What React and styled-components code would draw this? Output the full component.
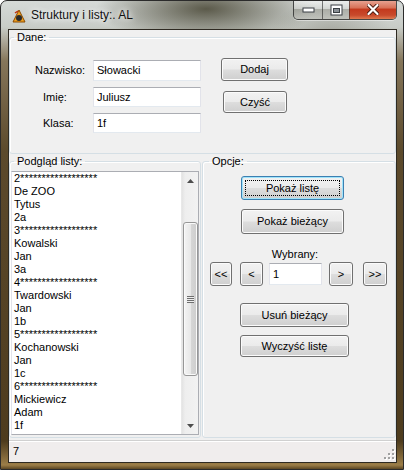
import React from 'react'
import styled, { createGlobalStyle, css } from 'styled-components'

const GlobalStyle = createGlobalStyle`
  html, body { margin: 0; padding: 0; background: #fff; }
  body { font-family: "Liberation Sans", Arial, sans-serif; font-size: 11px; }
  * { box-sizing: border-box; }
`

const stars = '*'.repeat(18)
const items = [
  '2' + stars, 'De ZOO', 'Tytus', '2a',
  '3' + stars, 'Kowalski', 'Jan', '3a',
  '4' + stars, 'Twardowski', 'Jan', '1b',
  '5' + stars, 'Kochanowski', 'Jan', '1c',
  '6' + stars, 'Mickiewicz', 'Adam', '1f',
]

const AppIcon = () => (
  <svg width="16" height="16" viewBox="0 0 16 16">
    <path d="M2 14 L8 2 L14 14 Z" fill="#f0a020" stroke="#8a4a00" strokeWidth="1" />
    <circle cx="8" cy="10" r="3" fill="#2a2a2a" />
    <path d="M4 5 L7 3" stroke="#c03010" strokeWidth="1.5" />
  </svg>
)

const MinGlyph = () => (
  <svg width="13" height="6" viewBox="0 0 13 6">
    <rect x="1" y="1" width="11" height="4" fill="#fff" stroke="#3a3f44" strokeWidth="1" />
  </svg>
)

const MaxGlyph = () => (
  <svg width="13" height="12" viewBox="0 0 13 12">
    <rect x="1" y="1" width="11" height="10" fill="#fff" stroke="#3a3f44" strokeWidth="1" />
    <rect x="3.5" y="4.5" width="6" height="4" fill="#8a9096" stroke="#3a3f44" strokeWidth="1" />
  </svg>
)

const CloseGlyph = () => (
  <svg width="12" height="11" viewBox="0 0 12 11">
    <path d="M1.5 1 L10.5 10 M10.5 1 L1.5 10" stroke="#4a1a10" strokeWidth="4" strokeLinecap="round" />
    <path d="M1.5 1 L10.5 10 M10.5 1 L1.5 10" stroke="#fff" strokeWidth="2.2" strokeLinecap="round" />
  </svg>
)

const UpArrow = () => (
  <svg width="7" height="4" viewBox="0 0 7 4"><path d="M0 4 L3.5 0 L7 4 Z" fill="#4d4d4d" /></svg>
)
const DownArrow = () => (
  <svg width="7" height="4" viewBox="0 0 7 4"><path d="M0 0 L3.5 4 L7 0 Z" fill="#4d4d4d" /></svg>
)

const Grip = () => (
  <svg width="11" height="11" viewBox="0 0 11 11">
    {[[8, 0], [8, 4], [4, 4], [8, 8], [4, 8], [0, 8]].map(([x, y], i) => (
      <g key={i}>
        <rect x={x + 1} y={y + 1} width="2" height="2" fill="#fff" />
        <rect x={x} y={y} width="2" height="2" fill="#a0a0a0" />
      </g>
    ))}
  </svg>
)

const Window = styled.div`
  width: 404px;
  height: 470px;
  display: flex;
  flex-direction: column;
  border: 1px solid #2b2b2b;
  border-radius: 7px 7px 0 0;
  overflow: hidden;
  background:
    radial-gradient(ellipse 110px 34px at 205px 8px, rgba(70, 68, 50, 0.85), transparent 100%),
    radial-gradient(ellipse 60px 30px at 330px 30px, rgba(150, 150, 140, 0.6), transparent 100%),
    linear-gradient(180deg, #d6dad8 0px, #c8ccc7 26px, #85765a 60px, #5c4a2c 150px, #4e3c1e 440px, #9c7e48 464px, #3a2a10 470px);
`

const TitleBar = styled.div`
  height: 28px;
  flex: none;
  display: flex;
  align-items: flex-start;
  padding-left: 10px;
`

const TitleIcon = styled.div`
  width: 16px;
  height: 16px;
  margin-top: 7px;
`

const TitleText = styled.div`
  margin: 6px 0 0 4px;
  font-family: "Liberation Sans", Arial, sans-serif;
  font-size: 12px;
  line-height: 16px;
  color: #111;
  text-shadow: 0 0 6px #fff, 0 0 10px rgba(255, 255, 255, 0.9);
`

const CaptionButtons = styled.div`
  margin-left: auto;
  margin-right: 6px;
  margin-top: -1px;
  display: flex;
  height: 20px;
  border: 1px solid rgba(30, 30, 30, 0.75);
  border-top: none;
  border-radius: 0 0 5px 5px;
  overflow: hidden;
  box-shadow: 0 1px 0 rgba(255, 255, 255, 0.45);
`

const CaptionButton = styled.div`
  width: ${p => p.$w}px;
  height: 100%;
  display: flex;
  align-items: center;
  justify-content: center;
  border-left: ${p => (p.$first ? 'none' : '1px solid rgba(40, 40, 40, 0.6)')};
  background: linear-gradient(180deg, rgba(255,255,255,0.55) 0%, rgba(230,232,230,0.35) 45%, rgba(120,120,110,0.35) 50%, rgba(200,200,195,0.45) 100%);
  ${p => p.$close && css`
    background: linear-gradient(180deg, #e9a898 0%, #d8735a 40%, #c43a1e 50%, #c84a2c 80%, #e07a50 100%);
  `}
`

const Client = styled.div`
  flex: 1;
  margin: 0 6px 6px 7px;
  border: 1px solid #2e2a22;
  background: #f0f0f0;
  display: flex;
  flex-direction: column;
  padding-top: 1px;
  color: #000;
`

const Group = styled.fieldset`
  margin: 0;
  padding: 0;
  min-width: 0;
  border: 1px solid #d5dfe5;
  border-radius: 3px;
  box-shadow: inset 1px 1px 0 #fff;
  ${p => p.$fill && css`flex: 1;`}
  ${p => p.$col && css`display: flex; flex-direction: column;`}
`

const Legend = styled.legend`
  margin-left: ${p => p.$indent || 4}px;
  padding: 0 3px;
  font-size: 11px;
  line-height: 13px;
  height: 13px;
`

const DaneBody = styled.div`
  display: flex;
  align-items: flex-start;
  height: 109px;
`

const FormCol = styled.div`
  display: flex;
  flex-direction: column;
  gap: 6px;
  padding-top: 16px;
`

const Row = styled.div`
  display: flex;
  align-items: center;
`

const Label = styled.div`
  width: 83px;
  padding-left: ${p => p.$pad}px;
  line-height: 13px;
`

const TextBox = styled.div`
  width: ${p => p.$w}px;
  height: ${p => p.$h || 20}px;
  background: #fff;
  border: 1px solid #e2e3ea;
  border-top-color: #abadb3;
  border-bottom-color: #e3e9ef;
  padding-left: 3px;
  display: flex;
  align-items: center;
  line-height: 13px;
`

const ButtonCol = styled.div`
  display: flex;
  flex-direction: column;
  align-items: flex-start;
  margin-left: 20px;
  padding-top: 14px;
`

const Button = styled.div`
  width: ${p => p.$w}px;
  height: ${p => p.$h}px;
  margin-left: ${p => p.$ml || 0}px;
  margin-top: ${p => p.$mt || 0}px;
  flex: none;
  display: flex;
  align-items: center;
  justify-content: center;
  border: 1px solid #707070;
  border-radius: 3px;
  background: linear-gradient(180deg, #f2f2f2 0%, #ebebeb 48%, #dddddd 52%, #cfcfcf 100%);
  box-shadow: inset 0 0 0 1px #fbfbfb;
  line-height: 13px;
  white-space: nowrap;
  position: relative;
  ${p => p.$focus && css`
    border-color: #3c7fb1;
    box-shadow: inset 0 0 0 1px #9fe4fb;
    &::after {
      content: "";
      position: absolute;
      inset: 3px;
      border: 1px dotted #000;
    }
  `}
`

const Middle = styled.div`
  flex: 1;
  display: flex;
  gap: 1px;
  margin-top: 1px;
`

const ListBox = styled.div`
  flex: 1;
  margin: 3px 1px 2px 1px;
  border: 1px solid #abadb3;
  border-left-color: #e2e3ea;
  background: #fff;
  display: flex;
  overflow: hidden;
`

const ListItems = styled.div`
  flex: 1;
  padding-left: 2px;
  overflow: hidden;
`

const ListItem = styled.div`
  height: 13px;
  line-height: 13px;
  white-space: nowrap;
`

const ScrollBar = styled.div`
  width: 17px;
  display: flex;
  flex-direction: column;
  background: linear-gradient(90deg, #e3e3e3 0%, #eeeeee 20%, #f2f2f2 100%);
  border-left: 1px solid #e8e8e8;
`

const ScrollArrow = styled.div`
  height: 17px;
  display: flex;
  align-items: center;
  justify-content: center;
`

const ScrollTrack = styled.div`
  flex: 1;
  display: flex;
  flex-direction: column;
  align-items: center;
`

const Thumb = styled.div`
  width: 15px;
  height: 154px;
  margin-top: 33px;
  border: 1px solid #979797;
  border-radius: 3px;
  background: linear-gradient(90deg, #f4f4f4 0%, #e8e8e8 50%, #d6d6d6 55%, #cdcdcd 100%);
  box-shadow: inset 0 0 0 1px #fafafa;
  display: flex;
  align-items: center;
  justify-content: center;
`

const ThumbGrip = styled.div`
  width: 7px;
  height: 7px;
  background: repeating-linear-gradient(180deg, #6e6e6e 0 1px, #eeeeee 1px 2px);
`

const OpcjeBody = styled.div`
  display: flex;
  flex-direction: column;
  align-items: flex-start;
  padding-top: 8px;
`

const Caption = styled.div`
  width: 56px;
  margin: 14px 0 0 64px;
  text-align: center;
  line-height: 13px;
`

const NavRow = styled.div`
  display: flex;
  align-items: center;
  margin: 1px 0 0 7px;
`

const StatusBar = styled.div`
  height: 22px;
  flex: none;
  margin-top: 2px;
  border-top: 1px solid #d0d0d0;
  box-shadow: inset 0 1px 0 #fff;
  background: #f0eded;
  display: flex;
  align-items: center;
  justify-content: space-between;
  padding: 0 1px 0 4px;
  line-height: 13px;
`

const GripBox = styled.div`
  align-self: flex-end;
  height: 13px;
`

export default function App() {
  return (
    <>
      <GlobalStyle />
      <Window>
        <TitleBar>
          <TitleIcon><AppIcon /></TitleIcon>
          <TitleText>Struktury i listy:. AL</TitleText>
          <CaptionButtons>
            <CaptionButton $w={28} $first><MinGlyph /></CaptionButton>
            <CaptionButton $w={27}><MaxGlyph /></CaptionButton>
            <CaptionButton $w={47} $close><CloseGlyph /></CaptionButton>
          </CaptionButtons>
        </TitleBar>

        <Client>
          <Group>
            <Legend>Dane:</Legend>
            <DaneBody>
              <FormCol>
                <Row>
                  <Label $pad={25}>Nazwisko:</Label>
                  <TextBox $w={108} $h={21}>Słowacki</TextBox>
                </Row>
                <Row>
                  <Label $pad={33}>Imię:</Label>
                  <TextBox $w={108}>Juliusz</TextBox>
                </Row>
                <Row>
                  <Label $pad={33}>Klasa:</Label>
                  <TextBox $w={108}>1f</TextBox>
                </Row>
              </FormCol>
              <ButtonCol>
                <Button $w={67} $h={23}>Dodaj</Button>
                <Button $w={64} $h={22} $ml={2} $mt={10}>Czyść</Button>
              </ButtonCol>
            </DaneBody>
          </Group>

          <Middle>
            <Group $fill $col style={{ flex: '0 0 192px' }}>
              <Legend>Podgląd listy:</Legend>
              <ListBox>
                <ListItems>
                  {items.map((t, i) => <ListItem key={i}>{t}</ListItem>)}
                </ListItems>
                <ScrollBar>
                  <ScrollArrow><UpArrow /></ScrollArrow>
                  <ScrollTrack>
                    <Thumb><ThumbGrip /></Thumb>
                  </ScrollTrack>
                  <ScrollArrow><DownArrow /></ScrollArrow>
                </ScrollBar>
              </ListBox>
            </Group>

            <Group $fill>
              <Legend $indent={6}>Opcje:</Legend>
              <OpcjeBody>
                <Button $w={103} $h={24} $ml={38} $focus>Pokaż listę</Button>
                <Button $w={103} $h={25} $ml={38} $mt={9}>Pokaż bieżący</Button>
                <Caption>Wybrany:</Caption>
                <NavRow>
                  <Button $w={22} $h={24}>&lt;&lt;</Button>
                  <Button $w={23} $h={24} $ml={8}>&lt;</Button>
                  <TextBox $w={53} $h={22} style={{ marginLeft: 6 }}>1</TextBox>
                  <Button $w={24} $h={24} $ml={7}>&gt;</Button>
                  <Button $w={24} $h={24} $ml={10}>&gt;&gt;</Button>
                </NavRow>
                <Button $w={109} $h={24} $ml={37} $mt={17}>Usuń bieżący</Button>
                <Button $w={109} $h={22} $ml={37} $mt={8}>Wyczyść listę</Button>
              </OpcjeBody>
            </Group>
          </Middle>

          <StatusBar>
            <span>7</span>
            <GripBox><Grip /></GripBox>
          </StatusBar>
        </Client>
      </Window>
    </>
  )
}
